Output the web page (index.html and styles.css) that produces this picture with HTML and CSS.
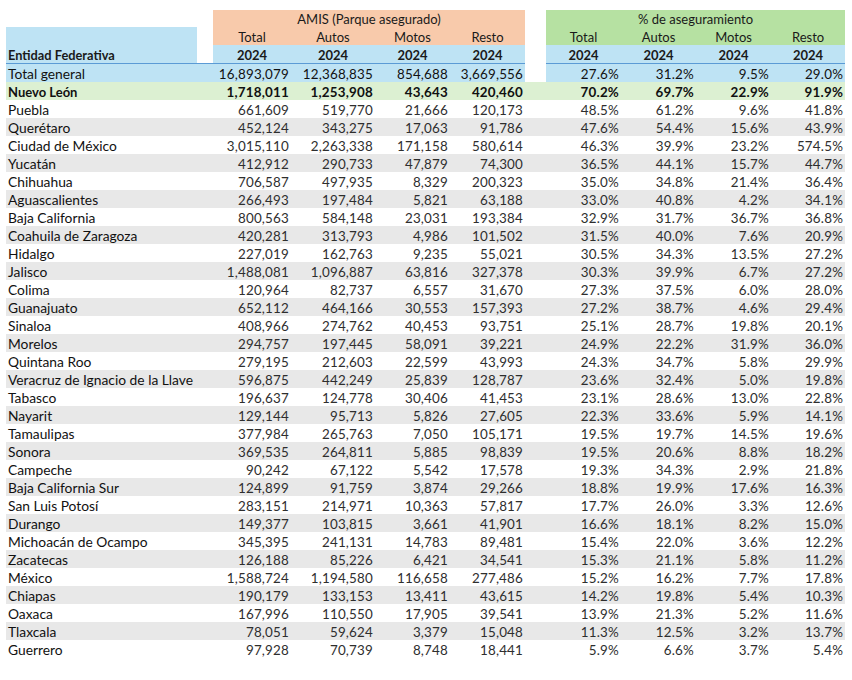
FILE: index.html
```html
<!DOCTYPE html>
<html lang="es">
<head>
<meta charset="utf-8">
<title>Parque asegurado</title>
<link rel="stylesheet" href="styles.css">
</head>
<body>
<table class="sheet">
<colgroup>
<col class="c-name"><col class="c-gap1">
<col class="c-t"><col class="c-a"><col class="c-m"><col class="c-r">
<col class="c-gap2">
<col class="c-p"><col class="c-p"><col class="c-p"><col class="c-p4">
</colgroup>
<thead>
<tr class="h1">
<th></th><th></th>
<th colspan="4" class="orange">AMIS (Parque asegurado)</th>
<th></th>
<th colspan="4" class="green">% de aseguramiento</th>
</tr>
<tr class="h2">
<th rowspan="2" class="blue ent">Entidad Federativa</th><th></th>
<th class="orange">Total</th><th class="orange">Autos</th><th class="orange">Motos</th><th class="orange">Resto</th>
<th></th>
<th class="green">Total</th><th class="green">Autos</th><th class="green">Motos</th><th class="green">Resto</th>
</tr>
<tr class="h3">
<th class="line"></th>
<th class="blue">2024</th><th class="blue">2024</th><th class="blue">2024</th><th class="blue">2024</th>
<th></th>
<th class="blue">2024</th><th class="blue">2024</th><th class="blue">2024</th><th class="blue">2024</th>
</tr>
</thead>
<tbody>
<tr class="total"><td>Total general</td><td></td><td>16,893,079</td><td>12,368,835</td><td>854,688</td><td>3,669,556</td><td class="gap"></td><td>27.6%</td><td>31.2%</td><td>9.5%</td><td>29.0%</td></tr>
<tr class="nl"><td>Nuevo León</td><td></td><td>1,718,011</td><td>1,253,908</td><td>43,643</td><td>420,460</td><td></td><td>70.2%</td><td>69.7%</td><td>22.9%</td><td>91.9%</td></tr>
<tr><td>Puebla</td><td></td><td>661,609</td><td>519,770</td><td>21,666</td><td>120,173</td><td></td><td>48.5%</td><td>61.2%</td><td>9.6%</td><td>41.8%</td></tr>
<tr><td>Querétaro</td><td></td><td>452,124</td><td>343,275</td><td>17,063</td><td>91,786</td><td></td><td>47.6%</td><td>54.4%</td><td>15.6%</td><td>43.9%</td></tr>
<tr><td>Ciudad de México</td><td></td><td>3,015,110</td><td>2,263,338</td><td>171,158</td><td>580,614</td><td></td><td>46.3%</td><td>39.9%</td><td>23.2%</td><td>574.5%</td></tr>
<tr><td>Yucatán</td><td></td><td>412,912</td><td>290,733</td><td>47,879</td><td>74,300</td><td></td><td>36.5%</td><td>44.1%</td><td>15.7%</td><td>44.7%</td></tr>
<tr><td>Chihuahua</td><td></td><td>706,587</td><td>497,935</td><td>8,329</td><td>200,323</td><td></td><td>35.0%</td><td>34.8%</td><td>21.4%</td><td>36.4%</td></tr>
<tr><td>Aguascalientes</td><td></td><td>266,493</td><td>197,484</td><td>5,821</td><td>63,188</td><td></td><td>33.0%</td><td>40.8%</td><td>4.2%</td><td>34.1%</td></tr>
<tr><td>Baja California</td><td></td><td>800,563</td><td>584,148</td><td>23,031</td><td>193,384</td><td></td><td>32.9%</td><td>31.7%</td><td>36.7%</td><td>36.8%</td></tr>
<tr><td>Coahuila de Zaragoza</td><td></td><td>420,281</td><td>313,793</td><td>4,986</td><td>101,502</td><td></td><td>31.5%</td><td>40.0%</td><td>7.6%</td><td>20.9%</td></tr>
<tr><td>Hidalgo</td><td></td><td>227,019</td><td>162,763</td><td>9,235</td><td>55,021</td><td></td><td>30.5%</td><td>34.3%</td><td>13.5%</td><td>27.2%</td></tr>
<tr><td>Jalisco</td><td></td><td>1,488,081</td><td>1,096,887</td><td>63,816</td><td>327,378</td><td></td><td>30.3%</td><td>39.9%</td><td>6.7%</td><td>27.2%</td></tr>
<tr><td>Colima</td><td></td><td>120,964</td><td>82,737</td><td>6,557</td><td>31,670</td><td></td><td>27.3%</td><td>37.5%</td><td>6.0%</td><td>28.0%</td></tr>
<tr><td>Guanajuato</td><td></td><td>652,112</td><td>464,166</td><td>30,553</td><td>157,393</td><td></td><td>27.2%</td><td>38.7%</td><td>4.6%</td><td>29.4%</td></tr>
<tr><td>Sinaloa</td><td></td><td>408,966</td><td>274,762</td><td>40,453</td><td>93,751</td><td></td><td>25.1%</td><td>28.7%</td><td>19.8%</td><td>20.1%</td></tr>
<tr><td>Morelos</td><td></td><td>294,757</td><td>197,445</td><td>58,091</td><td>39,221</td><td></td><td>24.9%</td><td>22.2%</td><td>31.9%</td><td>36.0%</td></tr>
<tr><td>Quintana Roo</td><td></td><td>279,195</td><td>212,603</td><td>22,599</td><td>43,993</td><td></td><td>24.3%</td><td>34.7%</td><td>5.8%</td><td>29.9%</td></tr>
<tr><td>Veracruz de Ignacio de la Llave</td><td></td><td>596,875</td><td>442,249</td><td>25,839</td><td>128,787</td><td></td><td>23.6%</td><td>32.4%</td><td>5.0%</td><td>19.8%</td></tr>
<tr><td>Tabasco</td><td></td><td>196,637</td><td>124,778</td><td>30,406</td><td>41,453</td><td></td><td>23.1%</td><td>28.6%</td><td>13.0%</td><td>22.8%</td></tr>
<tr><td>Nayarit</td><td></td><td>129,144</td><td>95,713</td><td>5,826</td><td>27,605</td><td></td><td>22.3%</td><td>33.6%</td><td>5.9%</td><td>14.1%</td></tr>
<tr><td>Tamaulipas</td><td></td><td>377,984</td><td>265,763</td><td>7,050</td><td>105,171</td><td></td><td>19.5%</td><td>19.7%</td><td>14.5%</td><td>19.6%</td></tr>
<tr><td>Sonora</td><td></td><td>369,535</td><td>264,811</td><td>5,885</td><td>98,839</td><td></td><td>19.5%</td><td>20.6%</td><td>8.8%</td><td>18.2%</td></tr>
<tr><td>Campeche</td><td></td><td>90,242</td><td>67,122</td><td>5,542</td><td>17,578</td><td></td><td>19.3%</td><td>34.3%</td><td>2.9%</td><td>21.8%</td></tr>
<tr><td>Baja California Sur</td><td></td><td>124,899</td><td>91,759</td><td>3,874</td><td>29,266</td><td></td><td>18.8%</td><td>19.9%</td><td>17.6%</td><td>16.3%</td></tr>
<tr><td>San Luis Potosí</td><td></td><td>283,151</td><td>214,971</td><td>10,363</td><td>57,817</td><td></td><td>17.7%</td><td>26.0%</td><td>3.3%</td><td>12.6%</td></tr>
<tr><td>Durango</td><td></td><td>149,377</td><td>103,815</td><td>3,661</td><td>41,901</td><td></td><td>16.6%</td><td>18.1%</td><td>8.2%</td><td>15.0%</td></tr>
<tr><td>Michoacán de Ocampo</td><td></td><td>345,395</td><td>241,131</td><td>14,783</td><td>89,481</td><td></td><td>15.4%</td><td>22.0%</td><td>3.6%</td><td>12.2%</td></tr>
<tr><td>Zacatecas</td><td></td><td>126,188</td><td>85,226</td><td>6,421</td><td>34,541</td><td></td><td>15.3%</td><td>21.1%</td><td>5.8%</td><td>11.2%</td></tr>
<tr><td>México</td><td></td><td>1,588,724</td><td>1,194,580</td><td>116,658</td><td>277,486</td><td></td><td>15.2%</td><td>16.2%</td><td>7.7%</td><td>17.8%</td></tr>
<tr><td>Chiapas</td><td></td><td>190,179</td><td>133,153</td><td>13,411</td><td>43,615</td><td></td><td>14.2%</td><td>19.8%</td><td>5.4%</td><td>10.3%</td></tr>
<tr><td>Oaxaca</td><td></td><td>167,996</td><td>110,550</td><td>17,905</td><td>39,541</td><td></td><td>13.9%</td><td>21.3%</td><td>5.2%</td><td>11.6%</td></tr>
<tr><td>Tlaxcala</td><td></td><td>78,051</td><td>59,624</td><td>3,379</td><td>15,048</td><td></td><td>11.3%</td><td>12.5%</td><td>3.2%</td><td>13.7%</td></tr>
<tr><td>Guerrero</td><td></td><td>97,928</td><td>70,739</td><td>8,748</td><td>18,441</td><td></td><td>5.9%</td><td>6.6%</td><td>3.7%</td><td>5.4%</td></tr>
</tbody>
</table>
</body>
</html>
```
FILE: styles.css
```css
html, body {
  margin: 0;
  padding: 0;
  background: #ffffff;
}

body {
  padding: 10px 0 0 6px;
  font-family: "Lato", "Noto Sans", sans-serif;
  color: #1a1a1a;
}

.sheet {
  border-collapse: collapse;
  table-layout: fixed;
  width: 839px;
}

.c-name { width: 191px; }
.c-gap1 { width: 16px; }
.c-t { width: 78px; }
.c-a { width: 84px; }
.c-m { width: 75px; }
.c-r { width: 75px; }
.c-gap2 { width: 21px; }
.c-p { width: 75px; }
.c-p4 { width: 74px; }

.sheet th,
.sheet td {
  padding: 0 2px 0 2px;
  white-space: nowrap;
  overflow: hidden;
}

.sheet th {
  font-weight: normal;
  font-size: 13px;
  text-align: center;
  vertical-align: bottom;
  line-height: 16px;
}

.h1 th { height: 17px; }
.h2 th { height: 18px; }
.h3 th {
  height: 18px;
  font-weight: 700;
  font-size: 13px;
  border-bottom: 1px solid #5b9bd5;
}
.h3 th:nth-child(6) { border-bottom: none; }

.orange { background: #f8caab; }
.green { background: #b6e1a2; }
.blue { background: #bee3f4; }

.sheet th.ent {
  text-align: left;
  font-weight: 700;
  font-size: 12.8px;
  padding-left: 2px;
  border-bottom: 1px solid #5b9bd5;
}

.sheet td {
  height: 18px;
  line-height: 16px;
  vertical-align: bottom;
  text-align: right;
  font-size: 13.4px;
  letter-spacing: 0.2px;
  color: #2e2e2e;
}

.sheet td:first-child {
  text-align: left;
  font-size: 13.8px;
  letter-spacing: 0;
  color: #111;
}

.sheet tbody tr:nth-child(2n+4) td {
  background: #e8e8e8;
}

.total td {
  background: #bee3f4;
  height: 18px;
  color: #111;
}
.total td.gap { background: #ffffff; }

.nl td {
  background: #dcf0d2;
  font-weight: 700;
  color: #111;
}
.nl td:first-child {
  font-size: 13px;
}
```
